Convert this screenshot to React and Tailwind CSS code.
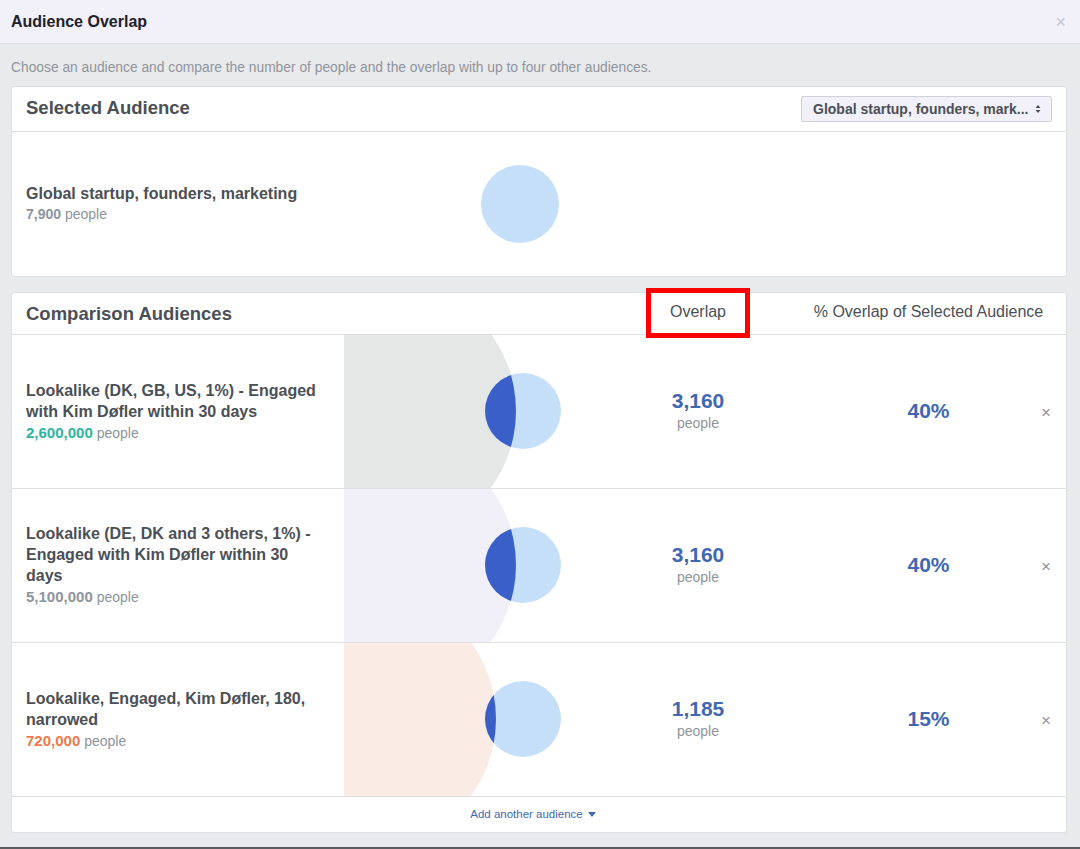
import React from 'react';

const rows = [
  {
    name: 'Lookalike (DK, GB, US, 1%) - Engaged with Kim Døfler within 30 days',
    size: '2,600,000',
    sizeColor: 'text-[#2bb5a0]',
    fill: '#e5e6e6',
    bigX: 42,
    bigR: 130,
    overlap: '3,160',
    pct: '40%',
  },
  {
    name: 'Lookalike (DE, DK and 3 others, 1%) - Engaged with Kim Døfler within 30 days',
    size: '5,100,000',
    sizeColor: 'text-[#8d949e]',
    fill: '#f1eff8',
    bigX: 42,
    bigR: 130,
    overlap: '3,160',
    pct: '40%',
  },
  {
    name: 'Lookalike, Engaged, Kim Døfler, 180, narrowed',
    size: '720,000',
    sizeColor: 'text-[#f0784c]',
    fill: '#fbebe5',
    bigX: 21,
    bigR: 131,
    overlap: '1,185',
    pct: '15%',
  },
];

const Venn = ({ id, fill, bigX, bigR }) => (
  <svg width="240" height="153" viewBox="0 0 240 153" className="block">
    <defs>
      <clipPath id={id}>
        <circle cx={bigX} cy="76" r={bigR} />
      </clipPath>
    </defs>
    <circle cx={bigX} cy="76" r={bigR} fill={fill} />
    <circle cx="179" cy="76" r="38" fill="#c6dff8" />
    <circle cx="179" cy="76" r="38" fill="#3b5fc9" clipPath={`url(#${id})`} />
  </svg>
);

const App = () => {
  return (
    <div className="w-[1080px] h-[849px] bg-[#e9eaeb] font-['Liberation_Sans',Arial,sans-serif] text-[#4b4f56] flex flex-col overflow-hidden">
      {/* modal title bar */}
      <div className="h-[44px] bg-[#f2f0f8] border-b border-[#dcdde0] flex items-center justify-between pl-[11px] pr-[14px] shrink-0">
        <h1 className="text-[16px] font-bold text-[#1d2129]">Audience Overlap</h1>
        <span className="text-[#c4c7cc] text-[18px] leading-none">×</span>
      </div>

      <div className="flex-1 px-[11px] pr-[13px] flex flex-col">
        <p className="text-[13.8px] text-[#90949c] mt-[15px] leading-[17px]">
          Choose an audience and compare the number of people and the overlap with up to four other audiences.
        </p>

        {/* selected audience */}
        <div className="mt-[10px] bg-white border border-[#dddfe2] rounded-[3px] h-[191px] flex flex-col">
          <div className="h-[45px] border-b border-[#dddfe2] flex items-center justify-between pl-[14px] pr-[14px]">
            <h2 className="text-[18.5px] font-bold text-[#4b4f56] -mt-[2px]">Selected Audience</h2>
            <div className="h-[26px] w-[251px] bg-[#f2f0f8] border border-[#cfd1d6] rounded-[2px] flex items-center justify-between pl-[11px] pr-[10px]">
              <span className="text-[14px] font-bold text-[#4b4f56] whitespace-nowrap">Global startup, founders, mark...</span>
              <svg width="6" height="10" viewBox="0 0 6 10">
                <path d="M3 1 L5.5 4 H0.5 Z M3 9 L0.5 6 H5.5 Z" fill="#4b4f56" />
              </svg>
            </div>
          </div>
          <div className="flex-1 flex items-center">
            <div className="w-[333px] pl-[14px] pr-[18px]">
              <div className="text-[16px] font-bold leading-[20px]">Global startup, founders, marketing</div>
              <div className="text-[14px] leading-[20px]">
                <span className="font-bold text-[#8d949e]">7,900</span>{' '}
                <span className="text-[#8d949e]">people</span>
              </div>
            </div>
            <div className="w-[240px] flex justify-start pl-[136px]">
              <div className="w-[78px] h-[78px] rounded-full bg-[#c6dff8]"></div>
            </div>
          </div>
        </div>

        {/* comparison audiences */}
        <div className="mt-[15px] bg-white border border-[#dddfe2] rounded-[3px] flex flex-col">
          <div className="h-[42px] border-b border-[#dddfe2] flex items-center">
            <h2 className="w-[572px] pl-[14px] text-[18.5px] font-bold text-[#4b4f56]">Comparison Audiences</h2>
            <div className="w-[228px] relative flex justify-center -mt-[3px]">
              <span className="text-[16px] text-[#4b4f56]">Overlap</span>
              {/* red highlight box */}
              <span className="absolute left-1/2 -translate-x-1/2 top-[-12px] w-[104px] h-[50px] border-[5px] border-[#ff0000]"></span>
            </div>
            <div className="w-[233px] text-center text-[16px] text-[#4b4f56] -mt-[3px] whitespace-nowrap">% Overlap of Selected Audience</div>
          </div>

          {rows.map((row, i) => (
            <div key={i} className="h-[154px] border-b border-[#dddfe2] flex items-center relative">
              <div className="w-[332px] pl-[14px] pr-[22px]">
                <div className="text-[16px] font-bold leading-[21px]">{row.name}</div>
                <div className="text-[14px] leading-[21px]">
                  <span className={`font-bold text-[15px] ${row.sizeColor}`}>{row.size}</span>{' '}
                  <span className="text-[#8d949e]">people</span>
                </div>
              </div>
              <div className="w-[240px] self-stretch flex items-center">
                <Venn id={`clip${i}`} fill={row.fill} bigX={row.bigX} bigR={row.bigR} />
              </div>
              <div className="w-[228px] flex flex-col items-center -mt-[1px]">
                <span className="text-[21px] font-bold text-[#4267b2] leading-[24px]">{row.overlap}</span>
                <span className="text-[14px] text-[#8d949e] leading-[20px]">people</span>
              </div>
              <div className="w-[233px] text-center text-[21px] font-bold text-[#4267b2] -mt-[2px]">{row.pct}</div>
              <span className="absolute right-[15px] top-1/2 -translate-y-1/2 text-[17px] text-[#90949c] leading-none">×</span>
            </div>
          ))}

          <div className="h-[35px] flex items-center justify-center pr-[12px]">
            <span className="text-[11.5px] text-[#4267b2]">Add another audience</span>
            <svg width="8" height="5" viewBox="0 0 8 5" className="ml-[5px]">
              <path d="M0 0 H8 L4 5 Z" fill="#4267b2" />
            </svg>
          </div>
        </div>
      </div>
      <div className="h-[2px] bg-[#5b5d60] shrink-0"></div>
    </div>
  );
};

export default App;
